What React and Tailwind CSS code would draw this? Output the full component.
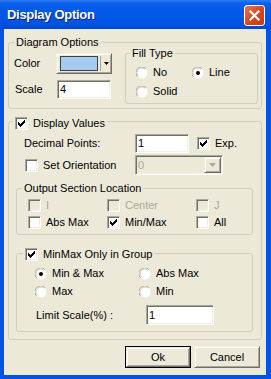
import React from "react";

const SUNKEN =
  "border border-t-[#ACA899] border-l-[#ACA899] border-r-white border-b-white shadow-[inset_1px_1px_0_#716F64,inset_-1px_-1px_0_#F1EFE2]";
const RAISED =
  "border border-t-[#F1EFE2] border-l-[#F1EFE2] border-r-[#716F64] border-b-[#716F64] shadow-[inset_1px_1px_0_#FFFFFF,inset_-1px_-1px_0_#ACA899]";

function Check({ checked, disabled }) {
  return (
    <span
      className={`w-[13px] h-[13px] shrink-0 flex items-center justify-center ${SUNKEN} ${
        disabled ? "bg-[#ECE9D8]" : "bg-white"
      }`}
    >
      {checked && (
        <svg width="7" height="7" viewBox="0 0 7 7" shapeRendering="crispEdges">
          <path d="M6 0h1v3h-1zM5 1h1v3h-1zM4 2h1v3h-1zM3 3h1v3h-1zM2 4h1v3h-1zM1 3h1v3h-1zM0 2h1v3h-1z" fill="#000" />
        </svg>
      )}
    </span>
  );
}

function Radio({ checked }) {
  return (
    <svg width="12" height="12" viewBox="0 0 12 12" className="shrink-0">
      <circle cx="6" cy="6" r="5.5" fill="#fff" />
      <path d="M1.6 9.9 A5.5 5.5 0 0 1 9.9 1.6" fill="none" stroke="#ACA899" strokeWidth="1" />
      <path d="M2.5 9.0 A4.4 4.4 0 0 1 9.0 2.5" fill="none" stroke="#D6D3C6" strokeWidth="1" />
      {checked && <circle cx="6" cy="6" r="2" fill="#000" />}
    </svg>
  );
}

function Group({ label, header, className = "", labelLeft = "left-[5px]", children }) {
  return (
    <div className={`relative border border-[#D0D0BF] rounded-[3px] ${className}`}>
      {label && (
        <div className={`absolute -top-[7px] ${labelLeft} bg-[#ECE9D8] px-[2px] leading-[13px]`}>{label}</div>
      )}
      {header}
      {children}
    </div>
  );
}

function CheckItem({ checked, disabled, label, className = "" }) {
  return (
    <div className={`flex items-center gap-[5px] h-[13px] ${className}`}>
      <Check checked={checked} disabled={disabled} />
      <span className={`leading-[13px] ${disabled ? "text-[#ACA899]" : ""}`}>{label}</span>
    </div>
  );
}

function RadioItem({ checked, label, className = "" }) {
  return (
    <div className={`flex items-center gap-[5px] h-[13px] ${className}`}>
      <Radio checked={checked} />
      <span className="leading-[13px]">{label}</span>
    </div>
  );
}

export default function App() {
  return (
    <div className="w-[271px] h-[379px] bg-[#0054E3] flex flex-col font-['Liberation_Sans',Arial,sans-serif] text-[11px] text-black">
      {/* Title bar */}
      <div className="h-[29px] shrink-0 flex items-center justify-between pl-[7px] pr-[6px] bg-[linear-gradient(to_bottom,#2E7DF6_0%,#0A5FEC_12%,#0058E6_45%,#0054E3_80%,#0048D0_100%)]">
        <span className="text-white font-bold text-[13px] tracking-[-0.3px] pt-[1px] [text-shadow:1px_1px_0_#0A1F8A]">
          Display Option
        </span>
        <div className="w-[21px] h-[21px] rounded-[3px] border border-white bg-[linear-gradient(135deg,#E8765A_0%,#D9431E_55%,#C53A1A_100%)] flex items-center justify-center mt-[2px]">
          <svg width="11" height="11" viewBox="0 0 11 11">
            <path d="M1.5 1.5 L9.5 9.5 M9.5 1.5 L1.5 9.5" stroke="#fff" strokeWidth="2.2" strokeLinecap="square" />
          </svg>
        </div>
      </div>

      {/* Body */}
      <div className="flex-1 ml-[4px] mr-[5px] mb-[4px] bg-[#ECE9D8] flex flex-col pl-[4px] pr-[4px]">
        {/* Diagram Options */}
        <Group label="Diagram Options" className="mt-[13px] h-[67px] flex">
          <div className="flex flex-col">
            <div className="flex items-center mt-[10px] pl-[5px]">
              <span className="w-[42px] leading-[13px]">Color</span>
              <div className={`w-[56px] h-[21px] flex items-center bg-[#ECE9D8] ${RAISED}`}>
                <div className="ml-[3px] w-[38px] h-[15px] bg-[#A6CAF0] border border-[#404040]" />
                <div className="ml-[2px] w-px h-[15px] bg-[#ACA899]" />
                <div className="flex-1 flex justify-center">
                  <svg width="5" height="3" viewBox="0 0 5 3">
                    <path d="M0 0 H5 L2.5 3 Z" fill="#000" />
                  </svg>
                </div>
              </div>
            </div>
            <div className="flex items-center mt-[6px] pl-[6px]">
              <span className="w-[42px] leading-[13px]">Scale</span>
              <div className={`w-[54px] h-[19px] bg-white flex items-center pl-[2px] ${SUNKEN}`}>4</div>
            </div>
          </div>

          <Group label="Fill Type" labelLeft="left-[4px]" className="ml-[13px] mt-[10px] w-[133px] h-[51px]">
            <div className="flex mt-[12px] pl-[10px]">
              <RadioItem label="No" className="w-[56px]" />
              <RadioItem checked label="Line" />
            </div>
            <div className="flex mt-[6px] pl-[10px]">
              <RadioItem label="Solid" />
            </div>
          </Group>
        </Group>

        {/* Display Values */}
        <Group
          className="mt-[12px] h-[219px]"
          header={
            <div className="absolute -top-[5px] left-[4px] bg-[#ECE9D8] px-[2px]">
              <CheckItem checked label="Display Values" />
            </div>
          }
        >
          <div className="flex items-center mt-[12px] pl-[15px]">
            <span className="w-[111px] leading-[13px]">Decimal Points:</span>
            <div className={`w-[54px] h-[19px] bg-white flex items-center pl-[2px] ${SUNKEN}`}>1</div>
            <CheckItem checked label="Exp." className="ml-[8px] gap-[4px]" />
          </div>
          <div className="flex items-center mt-[2px] pl-[16px]">
            <CheckItem label="Set Orientation" className="w-[110px] gap-[4px]" />
            <div className={`w-[88px] h-[20px] bg-[#ECE9D8] flex items-center ${SUNKEN}`}>
              <span className="flex-1 pl-[2px] text-[#ACA899] leading-[13px]">0</span>
              <div className={`w-[17px] h-[16px] mr-px flex items-center justify-center bg-[#ECE9D8] ${RAISED}`}>
                <svg width="7" height="4" viewBox="0 0 7 4">
                  <path d="M0 0 H7 L3.5 4 Z" fill="#ACA899" />
                </svg>
              </div>
            </div>
          </div>

          {/* Output Section Location */}
          <Group label="Output Section Location" className="ml-[7px] mr-[8px] mt-[13px] h-[47px]">
            <div className="flex mt-[10px] pl-[11px]">
              <CheckItem disabled label="I" className="w-[79px]" />
              <CheckItem disabled label="Center" className="w-[89px]" />
              <CheckItem disabled label="J" />
            </div>
            <div className="flex mt-[4px] pl-[11px]">
              <CheckItem label="Abs Max" className="w-[79px]" />
              <CheckItem checked label="Min/Max" className="w-[89px]" />
              <CheckItem label="All" />
            </div>
          </Group>

          {/* MinMax Only in Group */}
          <Group
            className="ml-[7px] mr-[8px] mt-[18px] h-[79px]"
            header={
              <div className="absolute -top-[6px] left-[6px] bg-[#ECE9D8] px-[2px]">
                <CheckItem checked label="MinMax Only in Group" className="gap-[4px]" />
              </div>
            }
          >
            <div className="flex mt-[13px] pl-[18px]">
              <RadioItem checked label="Min & Max" className="w-[104px]" />
              <RadioItem label="Abs Max" />
            </div>
            <div className="flex mt-[5px] pl-[18px]">
              <RadioItem label="Max" className="w-[104px]" />
              <RadioItem label="Min" />
            </div>
            <div className="flex items-center mt-[7px] pl-[19px]">
              <span className="w-[110px] leading-[13px]">Limit Scale(%) :</span>
              <div className={`w-[68px] h-[20px] bg-white flex items-center pl-[2px] ${SUNKEN}`}>1</div>
            </div>
          </Group>
        </Group>

        {/* Buttons */}
        <div className="flex justify-end gap-[3px] mt-[6px] mr-[2px]">
          <div className="w-[66px] h-[22px] border border-black">
            <div className={`w-full h-full flex items-center justify-center bg-[#ECE9D8] ${RAISED}`}>Ok</div>
          </div>
          <div className={`w-[66px] h-[22px] flex items-center justify-center bg-[#ECE9D8] ${RAISED}`}>Cancel</div>
        </div>
      </div>
    </div>
  );
}
